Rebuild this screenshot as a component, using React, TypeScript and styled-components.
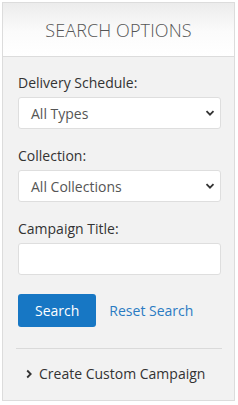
import styled, { createGlobalStyle } from 'styled-components'

const GlobalStyle = createGlobalStyle`
  body {
    margin: 0;
    background: #fff;
    font-family: "Open Sans", "Liberation Sans", sans-serif;
  }
`

const Panel = styled.div`
  margin: 2px;
  width: 231px;
  height: 397px;
  border: 1px solid #dcdcdc;
  background-color: #f2f2f2;
  display: flex;
  flex-direction: column;
`

const Header = styled.div`
  height: 53px;
  border-bottom: 1px solid #dcdcdc;
  background: linear-gradient(to bottom, #ececec 0%, #fbfbfb 55%, #ffffff 100%);
  display: flex;
  align-items: center;
  justify-content: center;
`

const Title = styled.h1`
  margin: 0;
  font-size: 18px;
  font-weight: 300;
  color: #555;
  letter-spacing: 0.1px;
`

const Body = styled.div`
  padding: 16px 13px 0 15px;
  display: flex;
  flex-direction: column;
`

const Field = styled.div`
  display: flex;
  flex-direction: column;
  margin-bottom: 17px;
`

const Label = styled.label`
  font-size: 14px;
  line-height: 20px;
  color: #333;
  margin-bottom: 4px;
`

const SelectBox = styled.div`
  height: 32px;
  box-sizing: border-box;
  border: 1px solid #dedede;
  border-radius: 3px;
  background: #fff;
  display: flex;
  align-items: center;
  justify-content: space-between;
  padding: 0 5px 0 12px;
  font-size: 14px;
  color: #555;
`

const TextInput = styled.input`
  height: 32px;
  box-sizing: border-box;
  border: 1px solid #dedede;
  border-radius: 3px;
  background: #fff;
  padding: 0 12px;
  font-size: 14px;
  font-family: inherit;
  outline: none;
`

const Actions = styled.div`
  display: flex;
  align-items: center;
  gap: 13px;
  margin-top: 2px;
`

const Button = styled.button`
  height: 33px;
  padding: 0 17px;
  border: none;
  border-radius: 3px;
  background-color: #1777c4;
  color: #fff;
  font-family: inherit;
  font-size: 14px;
`

const Link = styled.a`
  font-size: 14px;
  color: #2a7bc2;
  text-decoration: none;
`

const Divider = styled.hr`
  margin: 21px -1px 0 -2px;
  border: none;
  border-top: 1px solid #dadada;
`

const Toggle = styled.div`
  display: flex;
  align-items: center;
  gap: 5px;
  padding: 15px 0 0 6px;
  font-size: 14px;
  line-height: 20px;
  color: #333;
`

const Chevron = ({ dir }: { dir: 'down' | 'right' }) => (
  <svg width="10" height="10" viewBox="0 0 10 10">
    <path
      d={dir === 'down' ? 'M1.5 3.2 L5 6.7 L8.5 3.2' : 'M3.2 1.5 L6.7 5 L3.2 8.5'}
      fill="none"
      stroke="#333"
      strokeWidth="1.8"
    />
  </svg>
)

export default function App() {
  return (
    <>
      <GlobalStyle />
      <Panel>
        <Header>
          <Title>SEARCH OPTIONS</Title>
        </Header>
        <Body>
          <Field>
            <Label>Delivery Schedule:</Label>
            <SelectBox>
              All Types
              <Chevron dir="down" />
            </SelectBox>
          </Field>
          <Field>
            <Label>Collection:</Label>
            <SelectBox>
              All Collections
              <Chevron dir="down" />
            </SelectBox>
          </Field>
          <Field>
            <Label>Campaign Title:</Label>
            <TextInput />
          </Field>
          <Actions>
            <Button>Search</Button>
            <Link href="#">Reset Search</Link>
          </Actions>
          <Divider />
          <Toggle>
            <Chevron dir="right" />
            Create Custom Campaign
          </Toggle>
        </Body>
      </Panel>
    </>
  )
}
